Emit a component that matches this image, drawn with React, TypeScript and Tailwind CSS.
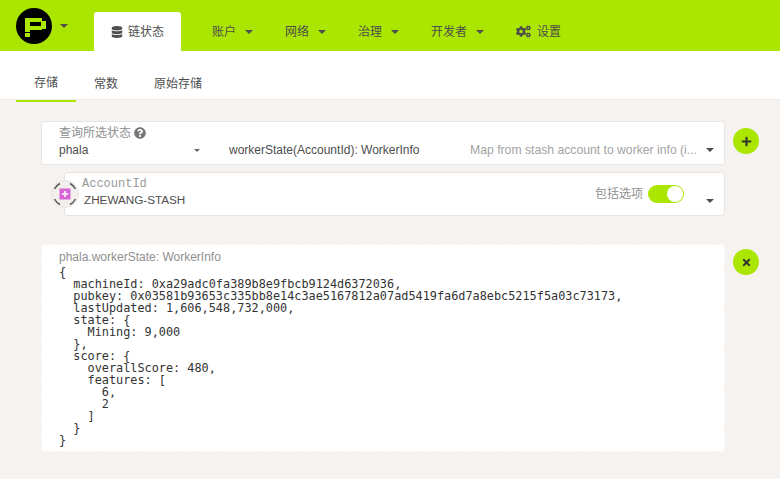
import { FaCogs, FaDatabase, FaPlus, FaQuestionCircle, FaTimes } from "react-icons/fa";

const sans = "font-['Liberation_Sans','Noto_Sans_CJK_SC',sans-serif]";

const Caret = ({ className = "" }: { className?: string }) => (
  <span className={`inline-block h-0 w-0 border-x-[4px] border-t-[4px] border-x-transparent border-t-[#4e4e4e] ${className}`} />
);

const Logo = () => (
  <svg width="36" height="36" viewBox="0 0 36 36">
    <circle cx="18" cy="18" r="18" fill="#000" />
    <path d="M9 10h17v3h4v8h-4v1H14v2H9zM14 14v4h11v-4zM9 25h5v4H9z" fill="#aae600" fillRule="evenodd" />
  </svg>
);

const Identicon = () => (
  <svg width="28" height="28" viewBox="0 0 28 28">
    <circle cx="14" cy="14" r="13.5" fill="#f2efed" stroke="#e6e4e2" />
    <path d="M3.5 9A12 12 0 0 1 9 3.5M19 3.5A12 12 0 0 1 24.5 9M24.5 19A12 12 0 0 1 19 24.5M9 24.5A12 12 0 0 1 3.5 19" fill="none" stroke="#555" strokeWidth="1.4" />
    <rect x="8.5" y="8.5" width="11" height="11" fill="#d865d8" />
    <path d="M11 13h2v-2h2v2h2v2h-2v2h-2v-2h-2z" fill="#f5e3f5" />
  </svg>
);

const navItems = ["账户", "网络", "治理", "开发者"];

const output = `{
  machineId: 0xa29adc0fa389b8e9fbcb9124d6372036,
  pubkey: 0x03581b93653c335bb8e14c3ae5167812a07ad5419fa6d7a8ebc5215f5a03c73173,
  lastUpdated: 1,606,548,732,000,
  state: {
    Mining: 9,000
  },
  score: {
    overallScore: 480,
    features: [
      6,
      2
    ]
  }
}`;

export default function App() {
  return (
    <div className={`h-[479px] w-[780px] overflow-hidden bg-[#f5f2f0] text-[12px] text-[#4e4e4e] ${sans}`}>
      {/* Top nav */}
      <header className="flex h-[51px] items-end bg-[#aae600] pl-4">
        <div className="flex h-full items-center">
          <Logo />
          <Caret className="ml-2" />
        </div>
        <div className="ml-[26px] flex h-[39px] items-center gap-[5px] rounded-t-[3px] bg-white px-[17px]">
          <FaDatabase className="text-[12px]" />
          <span>链状态</span>
        </div>
        <nav className="ml-[31px] flex h-[39px] items-center gap-8">
          {navItems.map((item) => (
            <div key={item} className="flex items-center gap-[9px]">
              <span>{item}</span>
              <Caret />
            </div>
          ))}
          <div className="flex items-center gap-[6px]">
            <FaCogs className="text-[15px]" />
            <span>设置</span>
          </div>
        </nav>
      </header>

      {/* Sub tabs */}
      <div className="flex h-[49px] border-b border-[#eeebe9] bg-white pl-4">
        <div className="flex h-[51px] items-center border-b-2 border-[#aae600] px-[18px] pt-[15px]">存储</div>
        <div className="flex h-[49px] items-center px-[18px] pt-[17px]">常数</div>
        <div className="flex h-[49px] items-center px-[18px] pt-[17px]">原始存储</div>
      </div>

      <main className="pl-[41px] pt-[21px]">
        {/* Query */}
        <div className="flex gap-2">
          <div className="h-[44px] w-[684px] rounded-[3px] border border-[#e8e6e4] bg-white pl-[17px] pr-[10px] pt-[3px]">
            <div className="flex h-[15px] items-center gap-[3px] text-[#8f8f8f]">
              <span>查询所选状态</span>
              <FaQuestionCircle className="text-[12px] text-[#777]" />
            </div>
            <div className="mt-[1px] flex h-[18px] items-center">
              <span className="w-[135px]">phala</span>
              <span className="inline-block h-0 w-0 border-x-[3px] border-t-[3px] border-x-transparent border-t-[#666]" />
              <span className="ml-[29px] flex-1">workerState(AccountId): WorkerInfo</span>
              <span className="text-[12.2px] text-[#a3a3a3]">Map from stash account to worker info (i...</span>
              <Caret className="ml-[9px]" />
            </div>
          </div>
          <button className="mt-[7px] flex h-[26px] w-[26px] items-center justify-center rounded-full bg-[#aae600] text-[11px] text-[#333]">
            <FaPlus />
          </button>
        </div>

        {/* Param */}
        <div className="relative ml-[23px] mt-[7px] flex h-[44px] w-[661px] items-center rounded-[3px] border border-[#e8e6e4] bg-white pl-[17px] pr-[10px]">
          <div className="absolute -left-[14px] top-[7px]">
            <Identicon />
          </div>
          <div className="flex-1 pb-[4px]">
            <div className="font-['Liberation_Mono',monospace] text-[12px] leading-[12px] text-[#999]">AccountId</div>
            <div className="ml-[2px] mt-[2px] text-[11.7px] leading-[15px]">ZHEWANG-STASH</div>
          </div>
          <div className="flex items-center gap-[5px]">
            <span className="text-[#8f8f8f]">包括选项</span>
            <div className="flex h-[18px] w-[36px] justify-end rounded-full bg-[#aae600] p-px">
              <div className="h-4 w-4 rounded-full bg-white" />
            </div>
          </div>
          <Caret className="ml-[22px] mt-[13px]" />
        </div>

        {/* Result */}
        <div className="mt-[28px] flex gap-2">
          <div className="h-[208px] w-[684px] border border-dashed border-[#f5f2f0] bg-white pl-[17px] pt-[5px]">
            <div className="leading-[15px] text-[#8f8f8f]">phala.workerState: WorkerInfo</div>
            <pre className="mt-[1px] font-['DejaVu_Sans_Mono',monospace] text-[11.85px] leading-[12px] text-[#333]">{output}</pre>
          </div>
          <button className="mt-[5px] flex h-[26px] w-[26px] items-center justify-center rounded-full bg-[#aae600] text-[11px] text-[#333]">
            <FaTimes />
          </button>
        </div>
      </main>
    </div>
  );
}
